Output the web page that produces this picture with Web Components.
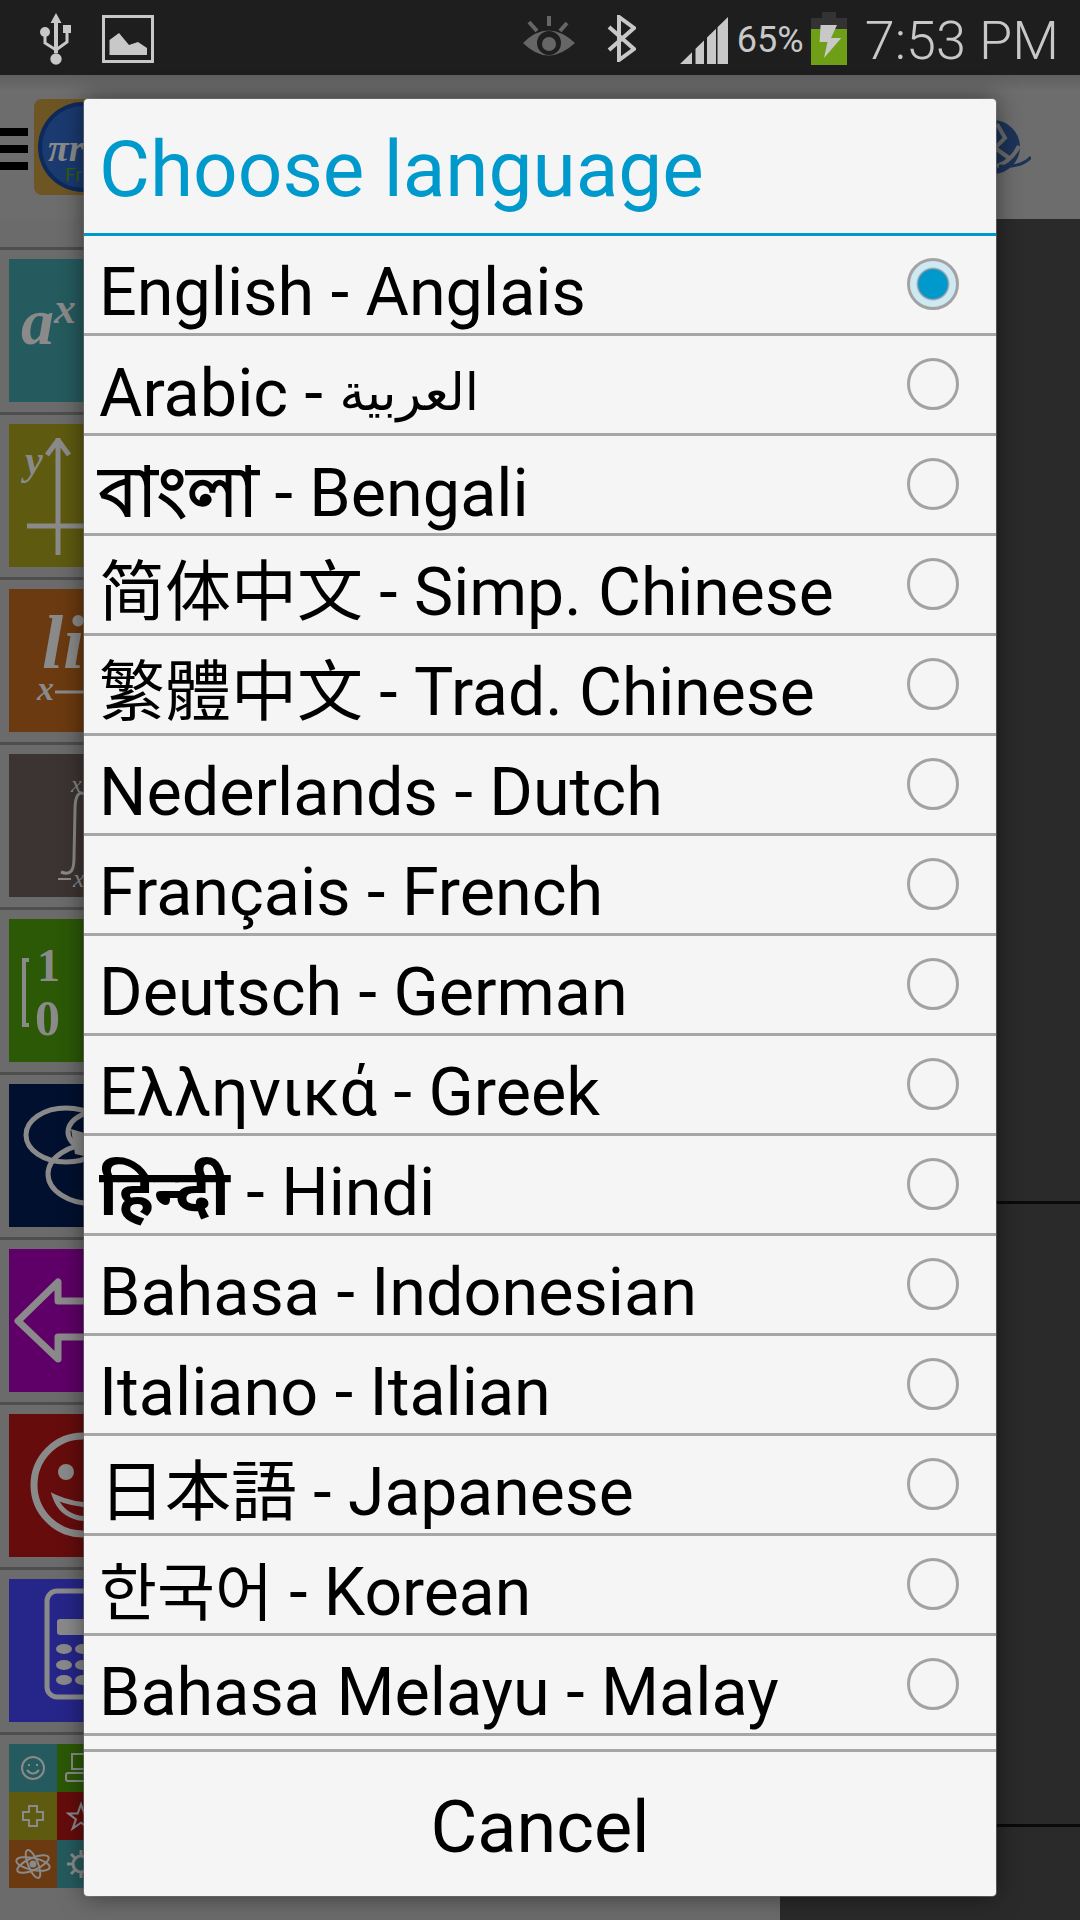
<!DOCTYPE html>
<html>
<head>
<meta charset="utf-8">
<title>Choose language</title>
<style>
  html, body { margin: 0; padding: 0; background: #2a2a2a; }
  body { width: 1080px; height: 1920px; overflow: hidden; position: relative; font-family: Roboto, "Noto Sans", "DejaVu Sans", sans-serif; }
</style>
</head>
<body>
<app-backdrop>
  <math-tile color="#255b5e"><svg width="143" height="143" viewBox="0 0 143 143"><text x="12" y="85" font-family="Liberation Serif" font-style="italic" font-weight="bold" font-size="66" fill="#8a8a8a">a</text><text x="45" y="64" font-family="Liberation Serif" font-style="italic" font-weight="bold" font-size="44" fill="#8a8a8a">x</text></svg></math-tile>
  <math-tile color="#5e5a10"><svg width="143" height="143" viewBox="0 0 143 143"><path d="M49 14V131M18 102H143M49 16L38 31M49 16L60 31" stroke="#8a8a8a" stroke-width="5" fill="none"/><text x="16" y="50" font-family="Liberation Serif" font-style="italic" font-weight="bold" font-size="40" fill="#8a8a8a">y</text></svg></math-tile>
  <math-tile color="#6b3a10"><svg width="143" height="143" viewBox="0 0 143 143"><text x="33" y="79" font-family="Liberation Serif" font-style="italic" font-weight="bold" font-size="76" fill="#8a8a8a">li</text><text x="28" y="111" font-family="Liberation Serif" font-style="italic" font-weight="bold" font-size="34" fill="#8a8a8a">x</text><path d="M46 103H80" stroke="#8a8a8a" stroke-width="3"/></svg></math-tile>
  <math-tile color="#3c3432"><svg width="143" height="143" viewBox="0 0 143 143"><path d="M75 40C68 36 66 46 66 56L65 104C65 116 62 122 52 118" stroke="#8a8a8a" stroke-width="3" fill="none"/><path d="M49 125H62" stroke="#8a8a8a" stroke-width="2"/><text x="64" y="133" font-family="Liberation Serif" font-style="italic" font-size="26" fill="#8a8a8a">x</text><text x="62" y="38" font-family="Liberation Serif" font-style="italic" font-size="24" fill="#8a8a8a">x</text></svg></math-tile>
  <math-tile color="#2b5906"><svg width="143" height="143" viewBox="0 0 143 143"><path d="M20 41H15V106H20" stroke="#8a8a8a" stroke-width="4" fill="none"/><text x="28" y="62" font-family="Liberation Serif" font-weight="bold" font-size="46" fill="#8a8a8a">1</text><text x="26" y="116" font-family="Liberation Serif" font-weight="bold" font-size="50" fill="#8a8a8a">0</text></svg></math-tile>
  <math-tile color="#00102e"><svg width="143" height="143" viewBox="0 0 143 143"><path d="M62 45L86 52L84 74L66 70Z" fill="#8a8a8a"/><g stroke="#8a8a8a" stroke-width="5" fill="none"><ellipse cx="57" cy="51" rx="40" ry="27"/><ellipse cx="85" cy="90" rx="46" ry="30"/><ellipse cx="105" cy="48" rx="46" ry="24"/></g></svg></math-tile>
  <math-tile color="#5f0068"><svg width="143" height="143" viewBox="0 0 143 143"><path d="M9 72L49 33V52H140V88H49V110Z" stroke="#8a8a8a" stroke-width="7" stroke-linejoin="round" fill="none"/></svg></math-tile>
  <math-tile color="#660c0c"><svg width="143" height="143" viewBox="0 0 143 143"><circle cx="74" cy="71" r="49" stroke="#8a8a8a" stroke-width="7" fill="none"/><circle cx="57" cy="58" r="8" fill="#8a8a8a"/><path d="M46 83Q75 96 110 88Q100 108 70 104Q52 100 46 83Z" stroke="#8a8a8a" stroke-width="5" fill="none"/></svg></math-tile>
  <math-tile color="#26268a"><svg width="143" height="143" viewBox="0 0 143 143"><rect x="38" y="12" width="90" height="106" rx="10" stroke="#8a8a8a" stroke-width="5" fill="none"/><rect x="48" y="40" width="70" height="16" rx="3" fill="#8a8a8a"/><g fill="#8a8a8a"><ellipse cx="55" cy="70" rx="8" ry="5"/><ellipse cx="55" cy="86" rx="8" ry="5"/><ellipse cx="55" cy="101" rx="8" ry="5"/><ellipse cx="74" cy="70" rx="8" ry="5"/><ellipse cx="74" cy="86" rx="8" ry="5"/><ellipse cx="74" cy="101" rx="8" ry="5"/></g></svg></math-tile>
  <more-tile></more-tile>
</app-backdrop>

<lang-dialog heading="Choose language" cancel="Cancel">
  <lang-row checked>English - Anglais</lang-row>
  <lang-row>Arabic - <span style="font-size:51px;vertical-align:6px">العربية</span></lang-row>
  <lang-row><span style="font-size:69px;font-weight:bold">বাংলা</span> - Bengali</lang-row>
  <lang-row cjk="SC">简体中文 - Simp. Chinese</lang-row>
  <lang-row cjk="TC">繁體中文 - Trad. Chinese</lang-row>
  <lang-row>Nederlands - Dutch</lang-row>
  <lang-row>Français - French</lang-row>
  <lang-row>Deutsch - German</lang-row>
  <lang-row>Ελληνικά - Greek</lang-row>
  <lang-row><span style="font-size:64px;font-weight:bold">हिन्दी</span> - Hindi</lang-row>
  <lang-row>Bahasa - Indonesian</lang-row>
  <lang-row>Italiano - Italian</lang-row>
  <lang-row cjk="JP">日本語 - Japanese</lang-row>
  <lang-row cjk="KR"><span style="font-size:63px">한국어</span> - Korean</lang-row>
  <lang-row>Bahasa Melayu - Malay</lang-row>
</lang-dialog>

<script>
const statusTemplate = document.createElement('template');
statusTemplate.innerHTML = `
  <style>
    :host { display: flex; align-items: flex-start; height: 75px; background: #1e1e1e; color: #c8c8c8; font-family: Roboto, sans-serif; }
    svg { display: block; flex: none; }
    .usb { margin: 13px 0 0 40px; }
    .image { margin: 15px 0 0 31px; }
    .spacer { flex: 1; }
    .eye { margin: 16px 31px 0 0; }
    .bt { margin: 15px 44px 0 0; }
    .signal { margin-top: 17px; }
    .pct { font-size: 36px; line-height: 75px; height: 72px; margin: 3px 7px 0 9px; }
    .battery { margin-top: 12px; }
    .time { font-size: 54px; line-height: 75px; height: 72px; margin: 3px 21px 0 18px; font-weight: 300; }
  </style>
  <svg class="usb" width="31" height="52" viewBox="0 0 31 52"><g fill="#c8c8c8"><path d="M16 0L21.5 10H18V40H14V10H10.500Z"/><circle cx="16" cy="46" r="5.700"/><circle cx="5" cy="19" r="5"/><rect x="23" y="12" width="8" height="8"/></g><path d="M5 20V30L16 37L27 29V20" stroke="#c8c8c8" stroke-width="3" fill="none"/></svg>
  <svg class="image" width="52" height="48" viewBox="0 0 52 48"><rect x="1.500" y="1.500" width="49" height="45" stroke="#c8c8c8" stroke-width="3" fill="none"/><path d="M7.500 40V25L17 18L27 30L36 27L45 33V40Z" fill="#c8c8c8"/></svg>
  <span class="spacer"></span>
  <svg class="eye" width="54" height="44" viewBox="0 0 54 44"><path d="M1 27Q26 2 53 27Q26 52 1 27Z" fill="#666"/><circle cx="27" cy="27" r="12" fill="#1e1e1e"/><circle cx="27" cy="28" r="7" fill="#666"/><path d="M7 6L15 15M27 0V10M45 7L38 15" stroke="#666" stroke-width="4"/></svg>
  <svg class="bt" width="29" height="47" viewBox="0 0 29 47"><path d="M2 12L27 34L12 45V2L27 13L2 35" stroke="#c8c8c8" stroke-width="4" fill="none"/></svg>
  <svg class="signal" width="48" height="47" viewBox="0 0 48 47"><path d="M0 47L12 35.200V47ZM15.500 31.800L24 23.500V47H15.500ZM27 20.600L36 11.800V47H27ZM37.500 10.300L48 0V47H37.500Z" fill="#c8c8c8"/></svg>
  <span class="pct">65%</span>
  <svg class="battery" width="36" height="53" viewBox="0 0 36 53"><path d="M11 0H25V6H36V53H0V6H11Z" fill="#333"/><rect y="17" width="36" height="36" fill="#6f9f17"/><path d="M9.600 13H26L20 26H30.300L13 46L16.500 30H8.600Z" fill="#c8c8c8"/></svg>
  <span class="time">7:53 PM</span>
`;

class StatusBar extends HTMLElement {
  constructor() {
    super();
    this.attachShadow({ mode: 'open' }).append(statusTemplate.content.cloneNode(true));
  }
}
customElements.define('status-bar', StatusBar);

const tileTemplate = document.createElement('template');
tileTemplate.innerHTML = `
  <style>
    :host { display: block; padding: 9px 0 10px 9px; border-top: 3px solid #4e4e4e; }
    .tile { width: 143px; height: 143px; overflow: hidden; }
    ::slotted(svg) { display: block; }
  </style>
  <div class="tile"><slot></slot></div>
`;

class MathTile extends HTMLElement {
  constructor() {
    super();
    this.attachShadow({ mode: 'open' }).append(tileTemplate.content.cloneNode(true));
    this.shadowRoot.querySelector('.tile').style.background = this.getAttribute('color');
  }
}
customElements.define('math-tile', MathTile);

const moreTemplate = document.createElement('template');
moreTemplate.innerHTML = `
  <style>
    :host { display: block; padding: 9px 0 0 9px; border-top: 3px solid #4e4e4e; }
    .grid { display: grid; grid-template-columns: repeat(3, 48px); grid-auto-rows: 48px; width: 144px; }
    .grid div { display: flex; align-items: center; justify-content: center; }
    svg { display: block; }
  </style>
  <div class="grid">
    <div style="background:#255b5e"><svg width="26" height="26" viewBox="0 0 26 26" fill="none" stroke="#8a8a8a" stroke-width="2"><circle cx="13" cy="13" r="11"/><path d="M7 15Q13 22 19 15"/><path d="M9 9V11M17 9V11"/></svg></div>
    <div style="background:#2b5906"><svg width="36" height="32" viewBox="0 0 36 32" fill="none" stroke="#8a8a8a" stroke-width="2"><rect x="9" y="2" width="18" height="15"/><rect x="3" y="21" width="30" height="8" rx="2"/></svg></div>
    <div style="background:#255b5e"></div>
    <div style="background:#5e5a10"><svg width="24" height="24" viewBox="0 0 24 24" fill="none" stroke="#8a8a8a" stroke-width="2"><path d="M8 2H16V8H22V16H16V22H8V16H2V8H8Z"/></svg></div>
    <div style="background:#660c0c"><svg width="30" height="30" viewBox="0 0 36 34" fill="none" stroke="#8a8a8a" stroke-width="2.500"><path d="M18 3L22 14H33L24 21L28 32L18 25L8 32L12 21L3 14H14Z"/></svg></div>
    <div style="background:#26268a"></div>
    <div style="background:#6b3a10"><svg width="38" height="32" viewBox="0 0 38 32" fill="none" stroke="#8a8a8a" stroke-width="2"><ellipse cx="19" cy="16" rx="17" ry="6" transform="rotate(12 19 16)"/><ellipse cx="19" cy="16" rx="17" ry="6" transform="rotate(-24 19 16)"/><ellipse cx="19" cy="16" rx="15" ry="5" transform="rotate(68 19 16)"/><circle cx="19" cy="16" r="2.500" fill="#8a8a8a"/></svg></div>
    <div style="background:#255b5e"><svg width="30" height="30" viewBox="0 0 30 30"><path d="M15 1V29M1 15H29M5 5L25 25M25 5L5 25" stroke="#8a8a8a" stroke-width="3"/><circle cx="15" cy="15" r="8" fill="#255b5e" stroke="#8a8a8a" stroke-width="3"/></svg></div>
    <div style="background:#5f0068"></div>
  </div>
`;

class MoreTile extends HTMLElement {
  constructor() {
    super();
    this.attachShadow({ mode: 'open' }).append(moreTemplate.content.cloneNode(true));
  }
}
customElements.define('more-tile', MoreTile);

const backdropTemplate = document.createElement('template');
backdropTemplate.innerHTML = `
  <style>
    :host { display: flex; flex-direction: column; width: 1080px; height: 1920px; }
    header { display: flex; align-items: flex-start; height: 144px; flex: none; background: linear-gradient(#5f5f5f, #6d6d6d 16px); }
    .menu { display: flex; flex-direction: column; gap: 9px; width: 28px; margin-top: 53px; }
    .menu i { display: block; height: 8px; background: #000; }
    .logo { margin: 24px 0 0 6px; }
    .globe { margin: 45px 49px 0 auto; }
    main { flex: 1; display: flex; min-height: 0; }
    .side { width: 780px; padding-top: 28px; box-sizing: border-box; background: #6b6b6b; }
    .content { flex: 1; background: #2a2a2a; }
    .pane { border-bottom: 3px solid #0a0a0a; }
    .pane.a { height: 982px; }
    .pane.b { height: 620px; }
  </style>
  <status-bar></status-bar>
  <header>
    <div class="menu"><i></i><i></i><i></i></div>
    <svg class="logo" width="60" height="96" viewBox="0 0 60 96"><rect width="80" height="96" rx="8" fill="#6e5524"/><circle cx="49" cy="48" r="45" fill="#0d2a5c"/><circle cx="49" cy="48" r="41" fill="#1a3a70"/><text x="14" y="62" font-family="Liberation Serif" font-style="italic" font-weight="bold" font-size="38" fill="#8a8a8a">πr</text><text x="31" y="82" font-family="Roboto" font-size="19" fill="#2e5f10">Fr</text></svg>
    <svg class="globe" width="70" height="60" viewBox="0 0 70 60"><circle cx="32" cy="27" r="27" fill="#1d3358"/><path d="M36 4L44 18L34 28L48 38M58 26Q50 42 36 46" stroke="#6b6b6b" stroke-width="4" fill="none"/><path d="M38 46Q60 48 70 37" stroke="#1d3358" stroke-width="3" fill="none"/></svg>
  </header>
  <main>
    <div class="side"><slot></slot></div>
    <div class="content"><div class="pane a"></div><div class="pane b"></div></div>
  </main>
`;

class AppBackdrop extends HTMLElement {
  constructor() {
    super();
    this.attachShadow({ mode: 'open' }).append(backdropTemplate.content.cloneNode(true));
  }
}
customElements.define('app-backdrop', AppBackdrop);

const rowTemplate = document.createElement('template');
rowTemplate.innerHTML = `
  <style>
    :host { display: flex; height: 100px; box-sizing: border-box; border-bottom: 3px solid #a6a6a6; padding-left: 15px; color: #000; font-size: 66.500px; }
    :host([cjk]) { font-size: 66px; }
    .label { flex: 1; white-space: nowrap; height: 97px; line-height: 113px; }
    .radio { width: 52px; height: 52px; margin: 22px 37px 0 0; box-sizing: border-box; border-radius: 50%; border: 3px solid #a3a3a3; flex: none; }
    :host([checked]) .radio { background: radial-gradient(circle, #0099cc 0 14px, #6b8f9e 15px, #cfe9f3 17px, #cfe9f3 100%); }
  </style>
  <span class="label"><slot></slot></span>
  <span class="radio"></span>
`;

class LangRow extends HTMLElement {
  constructor() {
    super();
    this.attachShadow({ mode: 'open' }).append(rowTemplate.content.cloneNode(true));
    const cjk = this.getAttribute('cjk');
    const fam = cjk ? `"Noto Sans CJK ${cjk}", ` : '';
    this.style.fontFamily = `Roboto, ${fam}"Noto Sans", "DejaVu Sans", sans-serif`;
  }
}
customElements.define('lang-row', LangRow);

const dialogTemplate = document.createElement('template');
dialogTemplate.innerHTML = `
  <style>
    :host { position: absolute; left: 84px; top: 99px; width: 912px; height: 1797px; display: flex; flex-direction: column; background: #f5f5f5; border-radius: 4px; box-shadow: 0 0 24px rgba(0,0,0,.5), 0 0 0 1px rgba(150,150,150,.6); overflow: hidden; font-family: Roboto, sans-serif; }
    h1 { margin: 0; height: 137px; box-sizing: border-box; padding-left: 15px; border-bottom: 3px solid #0099cc; color: #0099cc; font-size: 78.300px; font-weight: 400; line-height: 141px; flex: none; }
    .list { flex: none; }
    .gap { height: 13px; flex: none; }
    button { flex: 1; border: 0; border-top: 3px solid #a6a6a6; background: none; color: #000; font: 400 72px Roboto, sans-serif; padding: 6px 0 0; }
  </style>
  <h1></h1>
  <div class="list"><slot></slot></div>
  <div class="gap"></div>
  <button></button>
`;

class LangDialog extends HTMLElement {
  constructor() {
    super();
    this.attachShadow({ mode: 'open' }).append(dialogTemplate.content.cloneNode(true));
    this.shadowRoot.querySelector('h1').textContent = this.getAttribute('heading');
    this.shadowRoot.querySelector('button').textContent = this.getAttribute('cancel');
  }
}
customElements.define('lang-dialog', LangDialog);
</script>
</body>
</html>
